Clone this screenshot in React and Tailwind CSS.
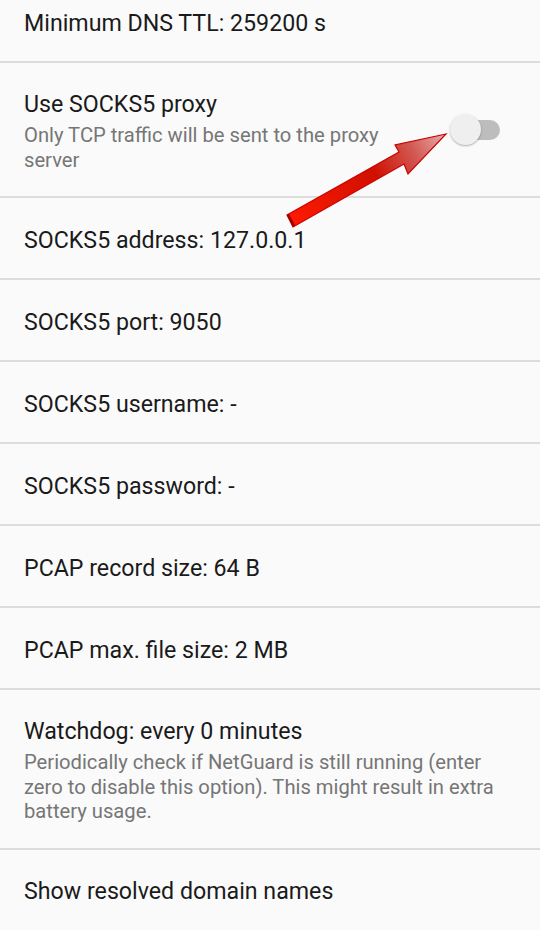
import React from "react";

function Divider() {
  return <div className="h-[2px] bg-[#dcdcdc]" />;
}

function Single({ title }) {
  return (
    <div className="h-[80px] flex items-center px-[24px] pt-[3px]">
      <span className="text-[23.2px] leading-[28px] text-[#1a1a1a]">{title}</span>
    </div>
  );
}

function Double({ title, sub, right, textClass = "" }) {
  return (
    <div className="flex items-start px-[24px] pt-[27px] pb-[24px]">
      <div className={"flex flex-col " + textClass}>
        <span className="text-[23.2px] leading-[28px] text-[#1a1a1a]">{title}</span>
        <span className="mt-[5px] text-[20.2px] leading-[24.5px] text-[#767676]">{sub}</span>
      </div>
      {right}
    </div>
  );
}

function Toggle() {
  return (
    <div className="relative ml-auto mt-[24px] w-[50px] h-[32px] mr-[16px] shrink-0">
      <div className="absolute left-[6px] right-0 top-[6px] h-[20px] rounded-full bg-[#bdbdbd]" />
      <div className="absolute left-0 top-0 w-[31px] h-[31px] rounded-full bg-[#efefef] shadow-[0_1px_2px_rgba(0,0,0,0.3)]" />
    </div>
  );
}

export default function App() {
  return (
    <div
      className="relative w-[540px] h-[930px] overflow-hidden bg-[#fafafa]"
      style={{ fontFamily: "Roboto, 'Noto Sans', sans-serif" }}
    >
      <div className="-mt-[19px]">
        <Single title="Minimum DNS TTL: 259200 s" />
        <Divider />
        <Double
          title="Use SOCKS5 proxy"
          sub="Only TCP traffic will be sent to the proxy server"
          textClass="w-[400px]"
          right={<Toggle />}
        />
        <Divider />
        <Single title="SOCKS5 address: 127.0.0.1" />
        <Divider />
        <Single title="SOCKS5 port: 9050" />
        <Divider />
        <Single title="SOCKS5 username: -" />
        <Divider />
        <Single title="SOCKS5 password: -" />
        <Divider />
        <Single title="PCAP record size: 64 B" />
        <Divider />
        <Single title="PCAP max. file size: 2 MB" />
        <Divider />
        <Double
          title="Watchdog: every 0 minutes"
          sub="Periodically check if NetGuard is still running (enter zero to disable this option). This might result in extra battery usage."
        />
        <Divider />
        <Single title="Show resolved domain names" />
      </div>

      <svg
        className="absolute left-0 top-0 pointer-events-none"
        width="540"
        height="930"
        viewBox="0 0 540 930"
      >
        <defs>
          <linearGradient id="ag" x1="288" y1="222" x2="446" y2="134" gradientUnits="userSpaceOnUse">
            <stop offset="0" stopColor="#ff1a00" />
            <stop offset="0.55" stopColor="#d01000" />
            <stop offset="0.8" stopColor="#d25a55" />
            <stop offset="1" stopColor="#e7b0ae" />
          </linearGradient>
        </defs>
        <polygon
          points="446,134 395,145 399,152 287,215 293,227 404,164 408,174"
          fill="url(#ag)"
          stroke="#c80000"
          strokeWidth="1.2"
          strokeLinejoin="miter"
        />
        <polygon points="287,215 293,227 295,225 289,214" fill="#a00000" />
      </svg>
    </div>
  );
}
